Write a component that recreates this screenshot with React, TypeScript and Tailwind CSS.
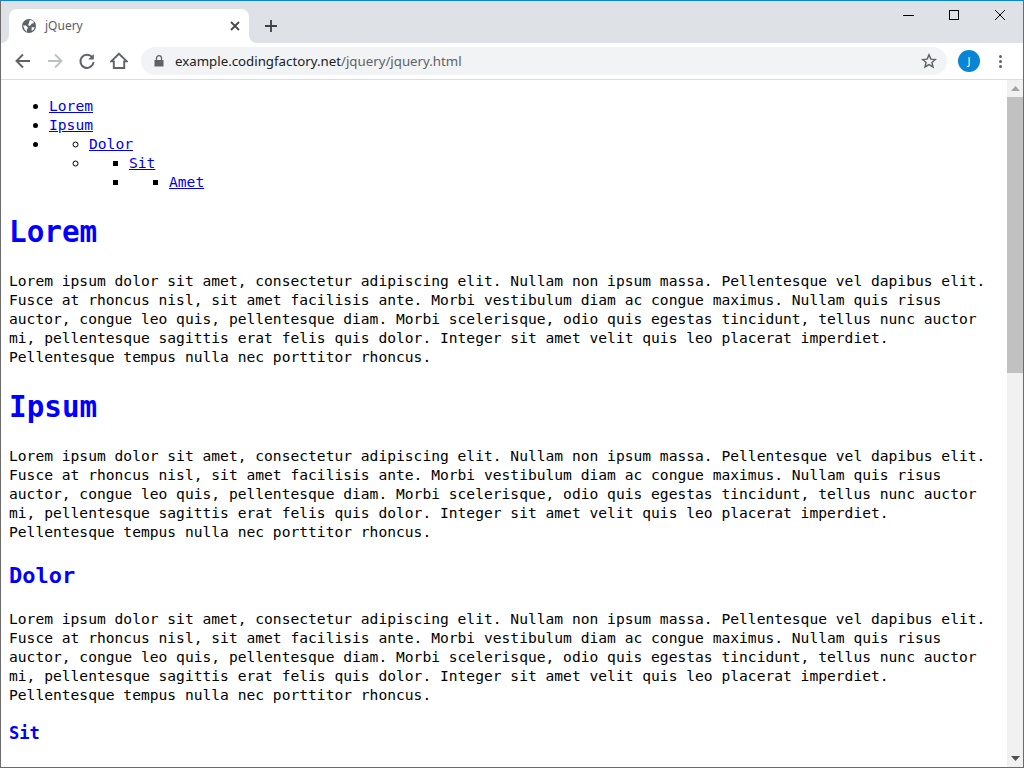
const lorem =
  "Lorem ipsum dolor sit amet, consectetur adipiscing elit. Nullam non ipsum massa. Pellentesque vel dapibus elit. Fusce at rhoncus nisl, sit amet facilisis ante. Morbi vestibulum diam ac congue maximus. Nullam quis risus auctor, congue leo quis, pellentesque diam. Morbi scelerisque, odio quis egestas tincidunt, tellus nunc auctor mi, pellentesque sagittis erat felis quis dolor. Integer sit amet velit quis leo placerat imperdiet. Pellentesque tempus nulla nec porttitor rhoncus.";

const NavLink = ({ children }: { children: string }) => (
  <a href="#" className="text-[#0000ee] underline">
    {children}
  </a>
);

const Para = () => <p className="my-[16px] leading-[19px]">{lorem}</p>;

const Flare = ({ flip }: { flip?: boolean }) => (
  <svg width="8" height="8" viewBox="0 0 8 8" className={`absolute bottom-0 ${flip ? "-right-2" : "-left-2"}`}>
    {flip ? <path d="M0 0 A8 8 0 0 0 8 8 L0 8 Z" fill="#fff" /> : <path d="M8 0 A8 8 0 0 1 0 8 L8 8 Z" fill="#fff" />}
  </svg>
);

export default function App() {
  return (
    <div className="h-[768px] w-[1024px] overflow-hidden flex flex-col bg-white border-t border-t-[#0a84d8] border-l border-l-[#6b6b6b] border-b border-b-[#6b6b6b] border-r border-r-[#6b6b6b] font-['Noto_Sans',sans-serif]">
      {/* tab strip */}
      <div className="h-[42px] shrink-0 bg-[#dee1e6] flex items-end pl-2 relative">
        <div className="relative w-[240px] h-[34px] bg-white rounded-t-lg flex items-center pl-[13px] pr-[9px]">
          <Flare />
          <Flare flip />
          <svg width="14" height="14" viewBox="0 0 16 16">
            <circle cx="8" cy="8" r="8" fill="#5f6368" />
            <path d="M9 1 L13 2.2 L13.5 4.5 L11 5.5 L9 8 L7 7 L8 4 Z M1.2 7.5 L4.5 7.5 L7 10 L5.5 12 L5.5 14.8 L3 12 Z M11 9.5 L14.5 9.5 L13 12.5 L11 13.5 Z" fill="#fff" />
          </svg>
          <span className="ml-[9px] text-[12px] text-[#5a5d62] flex-1">jQuery</span>
          <svg width="10" height="10" viewBox="0 0 10 10" stroke="#45484c" strokeWidth="1.8" fill="none">
            <path d="M1 1 L9 9 M9 1 L1 9" />
          </svg>
        </div>
        <svg width="14" height="14" viewBox="0 0 14 14" className="ml-[15px] mb-[10px]" stroke="#3c4043" strokeWidth="1.8" fill="none">
          <path d="M7 1 V13 M1 7 H13" />
        </svg>
        <div className="absolute right-[17px] top-[9px] flex items-center">
          <svg width="12" height="12" viewBox="0 0 12 12" stroke="#000" fill="none" className="mr-[34px]"><path d="M1 5.5 H12" /></svg>
          <svg width="12" height="12" viewBox="0 0 12 12" stroke="#000" fill="none" className="mr-[34px]"><rect x="1.5" y="0.5" width="9" height="9" /></svg>
          <svg width="12" height="12" viewBox="0 0 12 12" stroke="#000" fill="none"><path d="M1 0 L11 10 M11 0 L1 10" /></svg>
        </div>
      </div>
      {/* toolbar */}
      <div className="h-[37px] shrink-0 bg-white border-b border-b-[#dadce0] flex items-center pl-[13px] pr-[13px]">
        <svg width="18" height="18" viewBox="0 0 18 18" fill="none" stroke="#5f6368" strokeWidth="1.9"><path d="M16 9 H3 M9 2.5 L2.5 9 L9 15.5" /></svg>
        <svg width="18" height="18" viewBox="0 0 18 18" fill="none" stroke="#bdc1c6" strokeWidth="1.9" className="ml-[14px]"><path d="M2 9 H15 M9 2.5 L15.5 9 L9 15.5" /></svg>
        <svg width="18" height="18" viewBox="0 0 18 18" fill="none" className="ml-[14px]">
          <path d="M14.2 5.2 A6.6 6.6 0 1 0 15.6 10" stroke="#5f6368" strokeWidth="2" />
          <path d="M15.8 2 V7.6 H10.2 Z" fill="#5f6368" />
        </svg>
        <svg width="18" height="18" viewBox="0 0 18 18" fill="none" stroke="#5f6368" strokeWidth="1.9" className="ml-[14px]"><path d="M9 1.8 L1.2 9.4 H3.8 V16 H14.2 V9.4 H16.8 Z" strokeLinejoin="miter" /></svg>
        <div className="ml-[13px] w-[806px] h-[28px] rounded-full bg-[#f1f3f4] flex items-center pl-[13px] pr-[10px]">
          <svg width="10" height="12" viewBox="0 0 10 12" fill="#5f6368">
            <path d="M0.5 5 H9.5 V11.5 H0.5 Z" />
            <path d="M2.5 5 V3.2 A2.5 2.5 0 0 1 7.5 3.2 V5" fill="none" stroke="#5f6368" strokeWidth="1.3" />
          </svg>
          <span className="ml-[11px] pt-[2px] text-[13.28px] flex-1 whitespace-nowrap">
            <span className="text-[#202124]">example.codingfactory.net</span>
            <span className="text-[#5f6368]">/jquery/jquery.html</span>
          </span>
          <svg width="16" height="16" viewBox="0 0 24 24" fill="none" stroke="#5f6368" strokeWidth="2.2"><path d="M12 2.8 L14.8 9.2 L21.6 9.8 L16.4 14.3 L18 21 L12 17.4 L6 21 L7.6 14.3 L2.4 9.8 L9.2 9.2 Z" /></svg>
        </div>
        <div className="ml-[11px] w-[22px] h-[22px] rounded-full bg-[#0a84d6] text-white text-[11px] flex items-center justify-center">J</div>
        <div className="ml-[19px] flex flex-col gap-[2px]">
          <span className="w-[3px] h-[3px] rounded-full bg-[#5f6368]" />
          <span className="w-[3px] h-[3px] rounded-full bg-[#5f6368]" />
          <span className="w-[3px] h-[3px] rounded-full bg-[#5f6368]" />
        </div>
      </div>
      {/* page */}
      <div className="flex-1 min-h-0 flex">
        <main className="flex-1 min-w-0 overflow-hidden pl-2 pr-[6px] text-black text-[14.62px] leading-[19px] font-['DejaVu_Sans_Mono',monospace]">
          <ul className="mt-[16px] mb-0 pl-10 list-disc">
            <li><NavLink>Lorem</NavLink></li>
            <li><NavLink>Ipsum</NavLink></li>
            <li>
              <ul className="pl-10 list-[circle]">
                <li><NavLink>Dolor</NavLink></li>
                <li>
                  <ul className="pl-10 list-[square]">
                    <li><NavLink>Sit</NavLink></li>
                    <li>
                      <ul className="pl-10 list-[square]">
                        <li><NavLink>Amet</NavLink></li>
                      </ul>
                    </li>
                  </ul>
                </li>
              </ul>
            </li>
          </ul>
          <h1 className="mt-[21.44px] mb-[21.44px] pt-[3px] text-[29.3px] leading-[34px] font-bold text-[#0000ff]">Lorem</h1>
          <Para />
          <h1 className="mt-[21.44px] mb-[21.44px] pt-[3px] text-[29.3px] leading-[34px] font-bold text-[#0000ff]">Ipsum</h1>
          <Para />
          <h2 className="mt-[19.92px] mb-[19.92px] pt-[1px] text-[22px] leading-[27px] font-bold text-[#0000ff]">Dolor</h2>
          <Para />
          <h3 className="mt-[18.72px] mb-0 text-[17.1px] leading-[22px] font-bold text-[#0000ff]">Sit</h3>
        </main>
        <div className="w-[16px] shrink-0 bg-[#f1f1f1] flex flex-col items-center">
          <div className="h-[17px] w-full flex items-center justify-center">
            <svg width="9" height="5" viewBox="0 0 9 5" fill="#a3a3a3"><path d="M0 5 L4.5 0 L9 5 Z" /></svg>
          </div>
          <div className="h-[276px] w-full bg-[#c1c1c1]" />
          <div className="flex-1" />
          <div className="h-[17px] w-full flex items-center justify-center">
            <svg width="9" height="5" viewBox="0 0 9 5" fill="#505050"><path d="M0 0 L4.5 5 L9 0 Z" /></svg>
          </div>
        </div>
      </div>
    </div>
  );
}
